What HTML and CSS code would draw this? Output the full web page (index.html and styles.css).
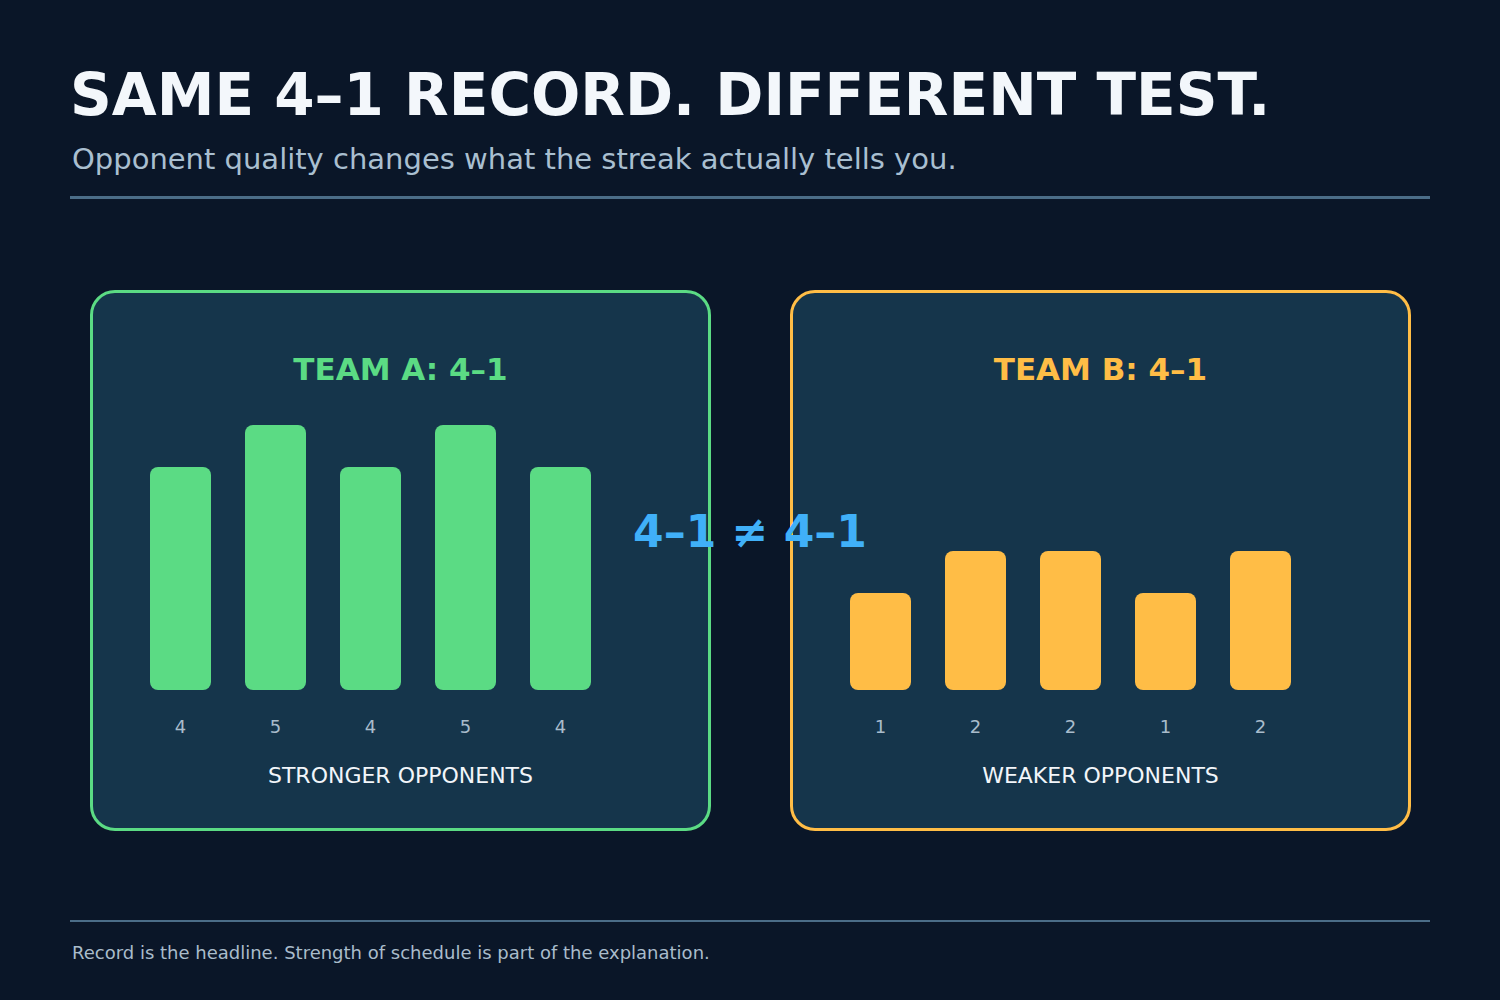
FILE: index.html
```html
<!DOCTYPE html>
<html lang="en">
<head>
<meta charset="utf-8">
<title>Same 4–1 record. Different test.</title>
<link rel="stylesheet" href="styles.css">
</head>
<body>
<div class="page">
  <header class="header">
    <h1 class="title">SAME 4–1 RECORD. DIFFERENT TEST.</h1>
    <p class="subtitle">Opponent quality changes what the streak actually tells you.</p>
    <div class="rule rule-top"></div>
  </header>

  <main class="compare">
    <section class="card card-a">
      <h2 class="card-title">TEAM A: 4–1</h2>
      <div class="chart">
        <div class="bar" style="height:223px"></div>
        <div class="bar" style="height:265px"></div>
        <div class="bar" style="height:223px"></div>
        <div class="bar" style="height:265px"></div>
        <div class="bar" style="height:223px"></div>
      </div>
      <div class="values">
        <span>4</span><span>5</span><span>4</span><span>5</span><span>4</span>
      </div>
      <div class="caption">STRONGER OPPONENTS</div>
    </section>

    <section class="card card-b">
      <h2 class="card-title">TEAM B: 4–1</h2>
      <div class="chart">
        <div class="bar" style="height:97px"></div>
        <div class="bar" style="height:139px"></div>
        <div class="bar" style="height:139px"></div>
        <div class="bar" style="height:97px"></div>
        <div class="bar" style="height:139px"></div>
      </div>
      <div class="values">
        <span>1</span><span>2</span><span>2</span><span>1</span><span>2</span>
      </div>
      <div class="caption">WEAKER OPPONENTS</div>
    </section>

    <div class="versus">4–1 ≠ 4–1</div>
  </main>

  <footer class="footer">
    <div class="rule rule-bottom"></div>
    <p class="note">Record is the headline. Strength of schedule is part of the explanation.</p>
  </footer>
</div>
</body>
</html>
```

FILE: styles.css
```css
html, body {
  margin: 0;
  padding: 0;
  background: #0a1628;
}

body {
  font-family: "DejaVu Sans", "Liberation Sans", sans-serif;
  color: #f2f6fa;
  width: 1500px;
  height: 1000px;
  overflow: hidden;
}

.page {
  padding: 60px 70px 0 70px;
  display: flex;
  flex-direction: column;
}

.title {
  margin: 0;
  font-size: 58px;
  line-height: 70px;
  font-weight: 700;
  color: #f3f7fb;
  letter-spacing: 0;
}

.subtitle {
  margin: 11px 0 0 2px;
  font-size: 29px;
  line-height: 36px;
  color: #a9bfd0;
}

.rule {
  background: #4b6d88;
}

.rule-top {
  height: 3px;
  margin-top: 19px;
}

.compare {
  position: relative;
  margin-top: 91px;
  padding: 0 19px 0 20px;
  display: flex;
  gap: 79px;
  height: 541px;
}

.card {
  box-sizing: border-box;
  width: 621px;
  height: 541px;
  border: 3px solid;
  border-radius: 25px;
  background: #15354b;
  display: flex;
  flex-direction: column;
  align-items: stretch;
}

.card-a { border-color: #5bdb84; }
.card-b { border-color: #ffbd46; }

.card-title {
  margin: 56px 0 0 0;
  text-align: center;
  font-size: 31px;
  line-height: 40px;
  font-weight: 700;
}

.card-a .card-title { color: #5bdb84; }
.card-b .card-title { color: #ffbd46; }

.chart {
  margin-top: 36px;
  height: 265px;
  padding-left: 57px;
  display: flex;
  align-items: flex-end;
  gap: 34px;
}

.bar {
  width: 61px;
  border-radius: 8px;
}

.card-a .bar { background: #5bdb84; }
.card-b .bar { background: #ffbd46; }

.values {
  margin-top: 25px;
  padding-left: 57px;
  display: flex;
  gap: 34px;
  font-size: 18px;
  line-height: 24px;
  color: #a9bccb;
}

.values span {
  width: 61px;
  text-align: center;
}

.caption {
  margin-top: 23px;
  text-align: center;
  font-size: 22px;
  line-height: 28px;
  color: #f2f6fa;
}

.versus {
  position: absolute;
  top: 216px;
  left: 50%;
  transform: translateX(-50%);
  white-space: nowrap;
  font-size: 44px;
  line-height: 52px;
  font-weight: 700;
  color: #40b0f8;
}

.footer {
  margin-top: 89px;
}

.rule-bottom {
  height: 2px;
}

.note {
  margin: 19px 0 0 2px;
  font-size: 18px;
  line-height: 24px;
  color: #a9bccb;
}
```
